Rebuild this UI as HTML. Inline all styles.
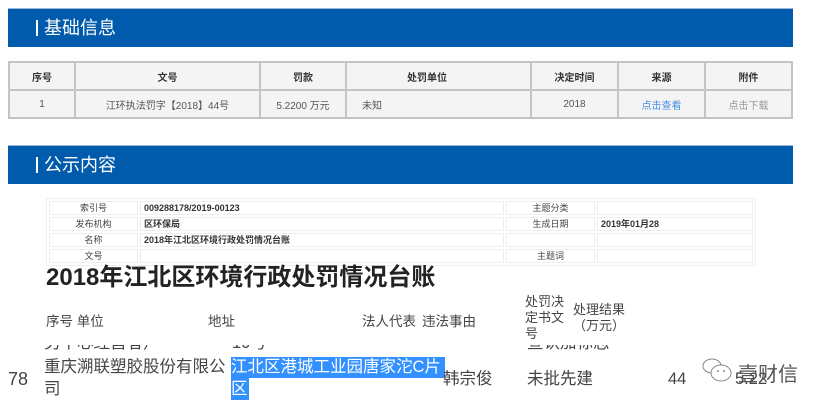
<!DOCTYPE html>
<html><head><meta charset="utf-8"><style>
*{margin:0;padding:0;box-sizing:border-box}
body{width:826px;height:404px;overflow:hidden;background:#fff;font-family:"Liberation Sans","Noto Sans CJK SC",sans-serif;position:relative;color:#333}
.a{position:absolute;white-space:nowrap}
.bar{position:absolute;left:8px;width:785px;height:39px;background:#005bac;border-top:1px solid #9bb7d8}
.bar span{position:absolute;left:36px;top:8px;color:#fff;font-size:18px;line-height:22px}
.bar i{position:absolute;left:28px;top:11px;width:2px;height:16px;background:#fff}
table.t{position:absolute;left:8px;top:61px;width:785px;border-collapse:collapse;background:#f4f4f4;font-size:10px}
table.t td{border:2px solid #c4c4c4;text-align:center;height:28px;color:#555}
table.t tr:first-child td{font-weight:bold;color:#333}
table.m{position:absolute;left:46px;top:198px;width:710px;border-collapse:separate;border-spacing:2px;border:1px solid #eee;font-size:9px}
table.m td{border:1px solid #eee;height:14px;padding:0 3px;line-height:12px;color:#333}
table.m td.l{text-align:center;color:#444}
table.m td.v{font-weight:bold}
.h{font-size:13.5px;color:#444}
.r{font-size:16.5px;color:#444;line-height:21px}
</style></head><body>
<div class="bar" style="top:8px"><i></i><span>基础信息</span></div>
<table class="t">
<tr><td style="width:66px">序号</td><td style="width:185px">文号</td><td style="width:86px">罚款</td><td style="width:185px;text-align:left;padding-left:60px">处罚单位</td><td style="width:87px">决定时间</td><td style="width:87px">来源</td><td>附件</td></tr>
<tr><td>1</td><td>江环执法罚字【2018】44号</td><td>5.2200 万元</td><td style="text-align:left;padding-left:15px">未知</td><td>2018</td><td style="color:#4a90e2">点击查看</td><td style="color:#999">点击下载</td></tr>
</table>
<div class="bar" style="top:145px"><i></i><span>公示内容</span></div>
<table class="m">
<tr><td class="l" style="width:89px">索引号</td><td class="v" style="width:364px">009288178/2019-00123</td><td class="l" style="width:89px">主题分类</td><td></td></tr>
<tr><td class="l">发布机构</td><td class="v">区环保局</td><td class="l">生成日期</td><td class="v">2019年01月28</td></tr>
<tr><td class="l">名称</td><td class="v">2018年江北区环境行政处罚情况台账</td><td class="l"></td><td></td></tr>
<tr><td class="l">文号</td><td></td><td class="l">主题词</td><td></td></tr>
</table>
<div class="a" style="left:46px;top:263px;font-size:24px;font-weight:bold;color:#222;line-height:30px">2018年江北区环境行政处罚情况台账</div>
<div class="a h" style="left:46px;top:310px">序号 单位</div>
<div class="a h" style="left:208px;top:310px">地址</div>
<div class="a h" style="left:362px;top:310px">法人代表</div>
<div class="a h" style="left:422px;top:310px">违法事由</div>
<div class="a h" style="left:525px;top:294px;line-height:16px;white-space:normal;width:44px;font-size:13px">处罚决定书文号</div>
<div class="a h" style="left:573px;top:302px;line-height:16px;text-align:center;font-size:13px">处理结果<br>（万元）</div>
<div style="position:absolute;left:0;top:345px;width:826px;height:8px;overflow:hidden"><div class="a r" style="left:44px;top:-12px">另午心经营者）</div><div class="a r" style="left:232px;top:-12px">10号</div><div class="a r" style="left:527px;top:-12px">宣认加标志</div></div>
<div class="a r" style="left:8px;top:369px;font-size:18px">78</div>
<div class="a r" style="left:44px;top:357px">重庆溯联塑胶股份有限公</div>
<div class="a r" style="left:44px;top:379px">司</div>
<div class="a" style="left:231px;top:357px;width:214px;height:21px;background:#3390ff"></div>
<div class="a" style="left:231px;top:378px;width:18px;height:22px;background:#3390ff"></div>
<div class="a r" style="left:231px;top:357px;color:#fff">江北区港城工业园唐家沱C片</div>
<div class="a r" style="left:231px;top:379px;color:#fff">区</div>
<div class="a r" style="left:443px;top:369px">韩宗俊</div>
<div class="a r" style="left:527px;top:369px">未批先建</div>
<div class="a r" style="left:668px;top:369px">44</div>
<div class="a r" style="left:735px;top:369px">5.22</div>
<svg class="a" style="left:701px;top:355px" width="34" height="30" viewBox="0 0 34 30"><ellipse cx="11" cy="11" rx="9" ry="7" fill="#fff" stroke="#888" stroke-width="1"/><ellipse cx="20" cy="18" rx="10" ry="8" fill="#fff" stroke="#888" stroke-width="1"/><circle cx="17" cy="16" r="1" fill="#888"/><circle cx="23" cy="16" r="1" fill="#888"/></svg>
<div class="a" style="left:738px;top:358px;font-size:20px;color:#555">壹财信</div>
</body></html>
